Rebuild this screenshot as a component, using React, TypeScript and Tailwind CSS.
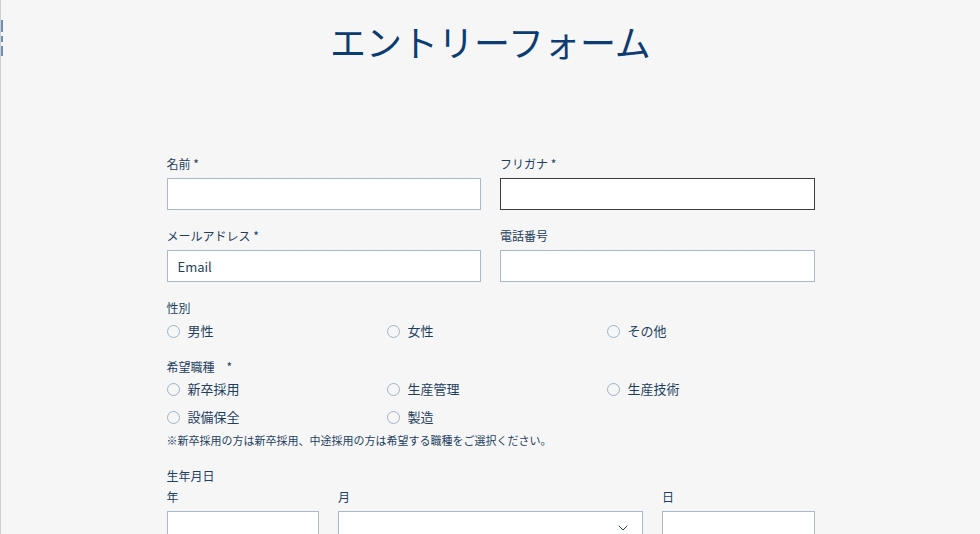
import { ChevronDown } from 'lucide-react';

const labelCls = 'block text-[12px] leading-[16px] mb-[6px] text-[#1e3f60]';
const inputCls = 'w-full h-[32px] bg-white border border-[#a7bacb] px-[10px] text-[13px] text-[#1e3f60] outline-none';

function Radio({ label }: { label: string }) {
  return (
    <label className="flex items-center gap-[8px] h-[20px] text-[13px] text-[#1e3f60]">
      <span className="w-[13px] h-[13px] rounded-full border border-[#9fb3c6] bg-transparent" />
      {label}
    </label>
  );
}

export default function App() {
  return (
    <div
      className="min-h-[534px] bg-[#f6f6f6] border-l border-[#cfcfcf] relative"
      style={{ fontFamily: '"Noto Sans CJK JP", "Noto Sans", sans-serif' }}
    >
      <div className="absolute left-0 top-[20px] flex flex-col gap-[4px]">
        <span className="w-[2px] h-[12px] bg-[#6d8fb3]" />
        <span className="w-[2px] h-[6px] bg-[#6d8fb3]" />
        <span className="w-[2px] h-[10px] bg-[#6d8fb3]" />
      </div>

      <h1 className="pt-[16px] text-center text-[36px] leading-[50px] font-normal text-[#0c3c72]">
        エントリーフォーム
      </h1>

      <div className="w-[648px] mx-auto mt-[90px]">
        <div className="grid grid-cols-2 gap-x-[19px] gap-y-[18px]">
          <div>
            <span className={labelCls}>名前 *</span>
            <input className={inputCls} />
          </div>
          <div>
            <span className={labelCls}>フリガナ *</span>
            <input className="w-full h-[32px] bg-white border border-[#3c3c3c] px-[10px] text-[13px] outline-none" />
          </div>
          <div>
            <span className={labelCls}>メールアドレス *</span>
            <input className={inputCls} defaultValue="Email" />
          </div>
          <div>
            <span className={labelCls}>電話番号</span>
            <input className={inputCls} />
          </div>
        </div>

        <div className="mt-[18px]">
          <span className={labelCls}>性別</span>
          <div className="grid grid-cols-[220px_220px_220px] -mt-[1px]">
            <Radio label="男性" />
            <Radio label="女性" />
            <Radio label="その他" />
          </div>
        </div>

        <div className="mt-[18px]">
          <span className={labelCls}>希望職種　*</span>
          <div className="grid grid-cols-[220px_220px_220px] gap-y-[8px] -mt-[2px]">
            <Radio label="新卒採用" />
            <Radio label="生産管理" />
            <Radio label="生産技術" />
            <Radio label="設備保全" />
            <Radio label="製造" />
          </div>
          <p className="mt-[5px] text-[11px] leading-[16px] text-[#1e3f60]">
            ※新卒採用の方は新卒採用、中途採用の方は希望する職種をご選択ください。
          </p>
        </div>

        <div className="mt-[20px]">
          <span className="block text-[12px] leading-[16px] text-[#1e3f60]">生年月日</span>
          <div className="grid grid-cols-[1fr_2fr_1fr] gap-x-[19px] mt-[5px]">
            <div>
              <span className={labelCls}>年</span>
              <input className={inputCls} />
            </div>
            <div>
              <span className={labelCls}>月</span>
              <div className="relative">
                <div className={inputCls} />
                <ChevronDown className="absolute right-[12px] top-[9px] w-[16px] h-[16px] text-[#1e3f60]" strokeWidth={1.5} />
              </div>
            </div>
            <div>
              <span className={labelCls}>日</span>
              <input className={inputCls} />
            </div>
          </div>
        </div>
      </div>
      <div className="h-[40px]" />
    </div>
  );
}
